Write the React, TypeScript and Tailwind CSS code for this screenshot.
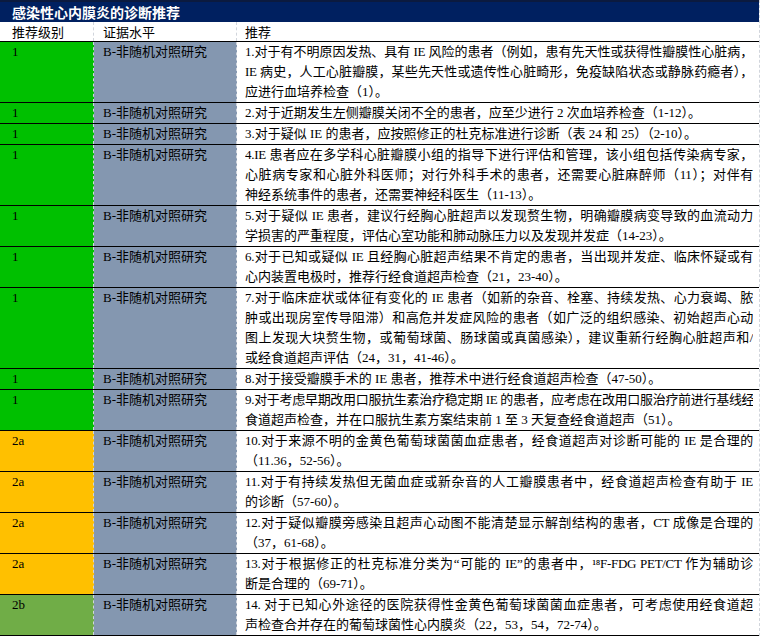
const rows: [string, string, string[]][] = [
  ["1", "#00c000", ["1.对于有不明原因发热、具有 IE 风险的患者（例如，患有先天性或获得性瓣膜性心脏病，", "IE 病史，人工心脏瓣膜，某些先天性或遗传性心脏畸形，免疫缺陷状态或静脉药瘾者），", "应进行血培养检查（1）。"]],
  ["1", "#00c000", ["2.对于近期发生左侧瓣膜关闭不全的患者，应至少进行 2 次血培养检查（1-12）。"]],
  ["1", "#00c000", ["3.对于疑似 IE 的患者，应按照修正的杜克标准进行诊断（表 24 和 25）（2-10）。"]],
  ["1", "#00c000", ["4.IE 患者应在多学科心脏瓣膜小组的指导下进行评估和管理，该小组包括传染病专家，", "心脏病专家和心脏外科医师；对行外科手术的患者，还需要心脏麻醉师（11）；对伴有", "神经系统事件的患者，还需要神经科医生（11-13）。"]],
  ["1", "#00c000", ["5.对于疑似 IE 患者，建议行经胸心脏超声以发现赘生物，明确瓣膜病变导致的血流动力", "学损害的严重程度，评估心室功能和肺动脉压力以及发现并发症（14-23）。"]],
  ["1", "#00c000", ["6.对于已知或疑似 IE 且经胸心脏超声结果不肯定的患者，当出现并发症、临床怀疑或有", "心内装置电极时，推荐行经食道超声检查（21，23-40）。"]],
  ["1", "#00c000", ["7.对于临床症状或体征有变化的 IE 患者（如新的杂音、栓塞、持续发热、心力衰竭、脓", "肿或出现房室传导阻滞）和高危并发症风险的患者（如广泛的组织感染、初始超声心动", "图上发现大块赘生物，或葡萄球菌、肠球菌或真菌感染），建议重新行经胸心脏超声和/", "或经食道超声评估（24，31，41-46）。"]],
  ["1", "#00c000", ["8.对于接受瓣膜手术的 IE 患者，推荐术中进行经食道超声检查（47-50）。"]],
  ["1", "#00c000", ["9.对于考虑早期改用口服抗生素治疗稳定期 IE 的患者，应考虑在改用口服治疗前进行基线经", "食道超声检查，并在口服抗生素方案结束前 1 至 3 天复查经食道超声（51）。"]],
  ["2a", "#ffc000", ["10.对于来源不明的金黄色葡萄球菌菌血症患者，经食道超声对诊断可能的 IE 是合理的", "（11.36，52-56）。"]],
  ["2a", "#ffc000", ["11.对于有持续发热但无菌血症或新杂音的人工瓣膜患者中，经食道超声检查有助于 IE", "的诊断（57-60）。"]],
  ["2a", "#ffc000", ["12.对于疑似瓣膜旁感染且超声心动图不能清楚显示解剖结构的患者，CT 成像是合理的", "（37，61-68）。"]],
  ["2a", "#ffc000", ["13.对于根据修正的杜克标准分类为“可能的 IE”的患者中，¹⁸F-FDG PET/CT 作为辅助诊", "断是合理的（69-71）。"]],
  ["2b", "#70ad47", ["14. 对于已知心外途径的医院获得性金黄色葡萄球菌菌血症患者，可考虑使用经食道超", "声检查合并存在的葡萄球菌性心内膜炎（22，53，54，72-74）。"]],
];

export default function App() {
  return (
    <div className="w-[762px] h-[638px] bg-white text-[13px] leading-[20px] text-black overflow-hidden" style={{ fontFamily: '"Liberation Serif","Noto Sans CJK SC",serif' }}>
      <div className="w-[760px] border-r border-dashed border-gray-300">
        <div className="h-[22px] bg-[#002060] text-white font-bold text-[14px] leading-[20px] pl-[12px] border-t-2 border-[#0b1a3f] overflow-hidden" style={{ fontFamily: '"Noto Sans CJK SC",sans-serif' }}>感染性心内膜炎的诊断推荐</div>
        <div className="flex h-[20px] border-b border-black overflow-hidden" style={{ fontFamily: '"Noto Sans CJK SC",sans-serif' }}>
          <div className="w-[94px] shrink-0 pl-[12px] h-[19px] leading-[19px] border-r border-dashed border-gray-300">推荐级别</div>
          <div className="w-[143px] shrink-0 pl-[9px] h-[19px] leading-[19px] border-r border-dashed border-gray-300">证据水平</div>
          <div className="flex-1 min-w-0 pl-[8px] h-[19px] leading-[19px]">推荐</div>
        </div>
        {rows.map(([g, c, lines], i) => (
          <div key={i} className="flex border-b border-black">
            <div className="w-[94px] shrink-0 pl-[12px] h-auto border-r border-dashed border-gray-300" style={{ background: c }}><div className="h-[20px] overflow-hidden">{g}</div></div>
            <div className="w-[143px] shrink-0 pl-[9px] bg-[#8497b0] border-r border-dashed border-gray-300"><div className="h-[20px] overflow-hidden">B-非随机对照研究</div></div>
            <div className="flex-1 min-w-0 pl-[8px] pr-[6px]">
              {lines.map((l, j) => (
                <div key={j} className={j < lines.length - 1 ? "h-[20px] [text-align-last:justify] whitespace-nowrap overflow-hidden tracking-[-0.3px]" : "h-[20px] whitespace-nowrap overflow-hidden"}>{l}</div>
              ))}
            </div>
          </div>
        ))}
      </div>
    </div>
  );
}
